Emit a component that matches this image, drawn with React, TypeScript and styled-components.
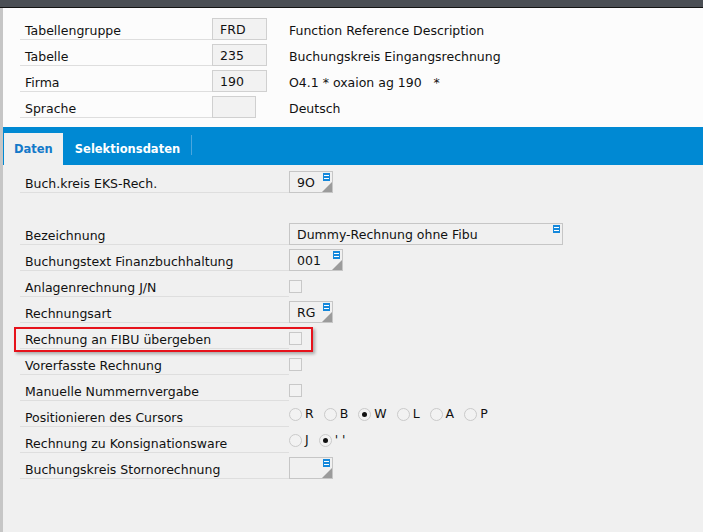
import styled, { createGlobalStyle } from "styled-components";

const GlobalStyle = createGlobalStyle`
  html, body {
    margin: 0;
    padding: 0;
    background: #f0f0f0;
  }
  body {
    font-family: "DejaVu Sans", "Liberation Sans", sans-serif;
    font-size: 12.5px;
    color: #111;
  }
`;

const Screen = styled.div`
  width: 703px;
  height: 532px;
  display: flex;
  flex-direction: column;
  overflow: hidden;
`;

const TopBar = styled.div`
  height: 7px;
  background: #4b4f55;
  border-bottom: 1px solid #141414;
  flex-shrink: 0;
`;

const Body = styled.div`
  flex: 1;
  display: flex;
  flex-direction: column;
  border-left: 3px solid #c6c6c6;
  background: #f0f0f0;
`;

const Header = styled.div`
  background: #fcfcfc;
  padding: 6px 0 9px 17px;
`;

const Row = styled.div`
  position: relative;
  display: flex;
  height: 26px;
`;

const Label = styled.div<{ $w: number }>`
  box-sizing: border-box;
  width: ${(p) => p.$w}px;
  height: 26px;
  padding: 0 0 1px 5px;
  display: flex;
  align-items: flex-end;
  line-height: 15px;
  border-bottom: 1px solid #dedede;
  white-space: nowrap;
  flex-shrink: 0;
`;

const FieldCell = styled.div<{ $w?: number }>`
  ${(p) => (p.$w ? `width: ${p.$w}px; flex-shrink: 0;` : "flex: 1;")}
  display: flex;
  align-items: flex-end;
`;

const Description = styled.div`
  display: flex;
  align-items: flex-end;
  padding-bottom: 2px;
  line-height: 15px;
  white-space: pre;
`;

const Box = styled.div<{ $w: number; $light?: boolean }>`
  position: relative;
  box-sizing: border-box;
  width: ${(p) => p.$w}px;
  height: 22px;
  padding: 1px 7px 0;
  display: flex;
  align-items: center;
  border: 1px solid ${(p) => (p.$light ? "#d0d0d0" : "#c6c6c6")};
  background: ${(p) => (p.$light ? "#f2f2f2" : "#f0f0f0")};
  white-space: nowrap;
  line-height: 15px;
`;

const HelpIcon = styled.svg`
  position: absolute;
  top: 1px;
  right: 2px;
`;

const Corner = styled.div`
  position: absolute;
  right: 0;
  bottom: 0;
  width: 0;
  height: 0;
  border-left: 10px solid transparent;
  border-bottom: 10px solid #9b9b9b;
`;

const TabBar = styled.div`
  height: 38px;
  box-sizing: border-box;
  background: #0089d3;
  padding: 6px 0 0 1px;
  display: flex;
  align-items: flex-end;
`;

const Tab = styled.div<{ $active?: boolean }>`
  height: 32px;
  box-sizing: border-box;
  display: flex;
  align-items: center;
  padding: 0 ${(p) => (p.$active ? "10px" : "11px")} 0
    ${(p) => (p.$active ? "10px" : "12px")};
  font-weight: bold;
  font-size: 11.5px;
  color: ${(p) => (p.$active ? "#1479c9" : "#ffffff")};
  background: ${(p) => (p.$active ? "#f0f0f0" : "transparent")};
`;

const TabDivider = styled.div`
  width: 1px;
  height: 20px;
  background: #4aa6de;
  align-self: flex-start;
  margin-top: 2px;
`;

const Content = styled.div`
  padding: 2px 0 0 17px;
`;

const Spacer = styled.div`
  height: 26px;
`;

const Checkbox = styled.div`
  box-sizing: border-box;
  width: 13px;
  height: 13px;
  margin-bottom: 4px;
  border: 1px solid #c8c8c8;
  background: #f2f2f2;
`;

const RadioGroup = styled.div`
  display: flex;
  align-items: center;
  margin-bottom: 6px;
`;

const RadioItem = styled.div`
  display: flex;
  align-items: center;
  margin-right: 10px;
`;

const RadioCircle = styled.div<{ $on?: boolean }>`
  box-sizing: border-box;
  width: 13px;
  height: 13px;
  border-radius: 50%;
  border: 1px solid #cacaca;
  background: #f2f2f2;
  margin-right: 3px;
  display: flex;
  align-items: center;
  justify-content: center;
  &::after {
    content: "";
    display: ${(p) => (p.$on ? "block" : "none")};
    width: 5px;
    height: 5px;
    border-radius: 50%;
    background: #111;
  }
`;

const RadioText = styled.span`
  line-height: 14px;
`;

const Highlight = styled.div`
  position: absolute;
  left: -6px;
  top: 4px;
  width: 299px;
  height: 25px;
  box-sizing: border-box;
  border: 2px solid #e6121b;
  box-shadow: 2px 2px 3px rgba(0, 0, 0, 0.3);
  pointer-events: none;
`;

function Help() {
  return (
    <HelpIcon width="7" height="8" viewBox="0 0 7 8">
      <rect x="0" y="0" width="7" height="8" fill="#1588db" />
      <rect x="1" y="2" width="5" height="1" fill="#ffffff" />
      <rect x="1" y="5" width="5" height="1" fill="#ffffff" />
    </HelpIcon>
  );
}

function ValueBox({
  value,
  w,
  corner = true,
}: {
  value: string;
  w: number;
  corner?: boolean;
}) {
  return (
    <Box $w={w}>
      {value}
      <Help />
      {corner && <Corner />}
    </Box>
  );
}

function Radios({ items, checked }: { items: string[]; checked: string }) {
  return (
    <RadioGroup>
      {items.map((it) => (
        <RadioItem key={it}>
          <RadioCircle $on={it === checked} />
          <RadioText>{it}</RadioText>
        </RadioItem>
      ))}
    </RadioGroup>
  );
}

const header = [
  { label: "Tabellengruppe", value: "FRD", w: 55, desc: "Function Reference Description" },
  { label: "Tabelle", value: "235", w: 55, desc: "Buchungskreis Eingangsrechnung" },
  { label: "Firma", value: "190", w: 55, desc: "O4.1 * oxaion ag 190   *" },
  { label: "Sprache", value: "", w: 44, desc: "Deutsch" },
];

const LW = 269;

export default function App() {
  return (
    <>
      <GlobalStyle />
      <Screen>
        <TopBar />
        <Body>
          <Header>
            {header.map((h) => (
              <Row key={h.label}>
                <Label $w={192}>{h.label}</Label>
                <FieldCell $w={77}>
                  <Box $w={h.w} $light>
                    {h.value}
                  </Box>
                </FieldCell>
                <Description>{h.desc}</Description>
              </Row>
            ))}
          </Header>
          <TabBar>
            <Tab $active>Daten</Tab>
            <Tab>Selektionsdaten</Tab>
            <TabDivider />
          </TabBar>
          <Content>
            <Row>
              <Label $w={LW}>Buch.kreis EKS-Rech.</Label>
              <FieldCell>
                <ValueBox value="9O" w={44} />
              </FieldCell>
            </Row>
            <Spacer />
            <Row>
              <Label $w={LW}>Bezeichnung</Label>
              <FieldCell>
                <ValueBox value="Dummy-Rechnung ohne Fibu" w={274} corner={false} />
              </FieldCell>
            </Row>
            <Row>
              <Label $w={LW}>Buchungstext Finanzbuchhaltung</Label>
              <FieldCell>
                <ValueBox value="001" w={54} />
              </FieldCell>
            </Row>
            <Row>
              <Label $w={LW}>Anlagenrechnung J/N</Label>
              <FieldCell>
                <Checkbox />
              </FieldCell>
            </Row>
            <Row>
              <Label $w={LW}>Rechnungsart</Label>
              <FieldCell>
                <ValueBox value="RG" w={44} />
              </FieldCell>
            </Row>
            <Row>
              <Label $w={LW}>Rechnung an FIBU übergeben</Label>
              <FieldCell>
                <Checkbox />
              </FieldCell>
              <Highlight />
            </Row>
            <Row>
              <Label $w={LW}>Vorerfasste Rechnung</Label>
              <FieldCell>
                <Checkbox />
              </FieldCell>
            </Row>
            <Row>
              <Label $w={LW}>Manuelle Nummernvergabe</Label>
              <FieldCell>
                <Checkbox />
              </FieldCell>
            </Row>
            <Row>
              <Label $w={LW}>Positionieren des Cursors</Label>
              <FieldCell>
                <Radios items={["R", "B", "W", "L", "A", "P"]} checked="W" />
              </FieldCell>
            </Row>
            <Row>
              <Label $w={LW}>Rechnung zu Konsignationsware</Label>
              <FieldCell>
                <Radios items={["J", "' '"]} checked="' '" />
              </FieldCell>
            </Row>
            <Row>
              <Label $w={LW}>Buchungskreis Stornorechnung</Label>
              <FieldCell>
                <ValueBox value="" w={44} />
              </FieldCell>
            </Row>
          </Content>
        </Body>
      </Screen>
    </>
  );
}
